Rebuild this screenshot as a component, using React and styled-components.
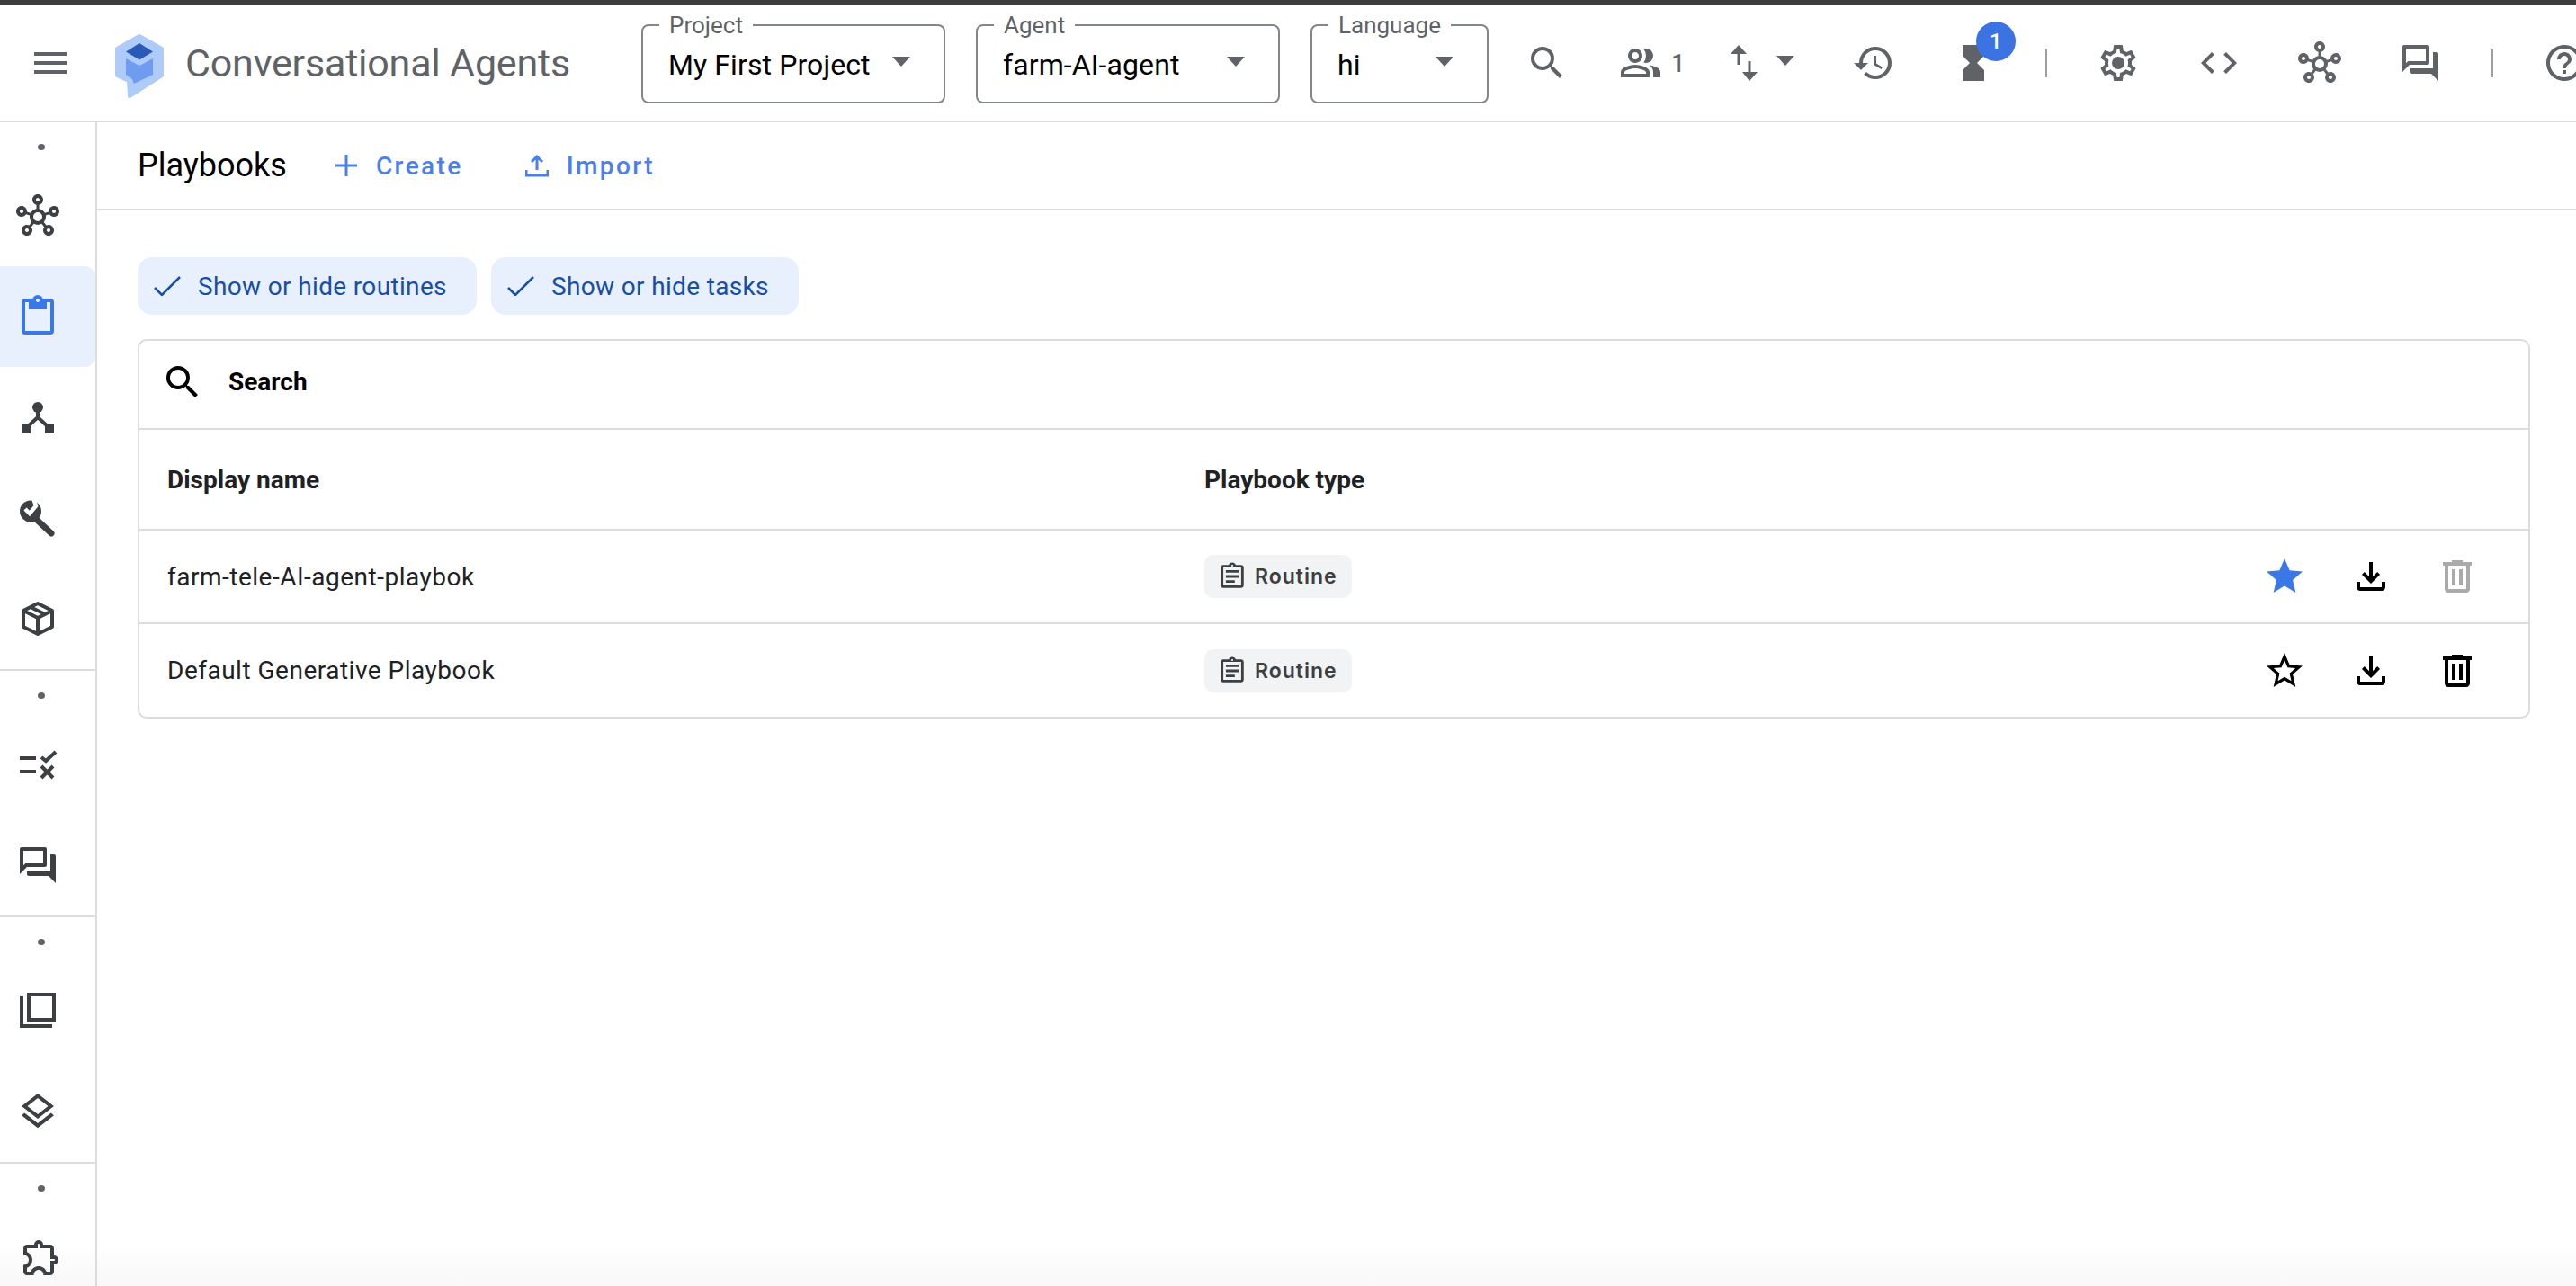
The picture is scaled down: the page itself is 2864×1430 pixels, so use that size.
import styled, {createGlobalStyle} from "styled-components";
import {
    MdMenu, MdSearch, MdOutlinePeopleAlt, MdHistory, MdHourglassFull,
    MdCode, MdOutlineHub, MdOutlineForum, MdHelpOutline, MdStar,
    MdStarBorder, MdOutlineLayers, MdOutlineExtension, MdOutlineAssignment,
} from "react-icons/md";

const GlobalStyle = createGlobalStyle`
    html, body {
        margin: 0;
        height: 100%;
        overflow: hidden;
        background: #fff;
    }
    #root {
        height: 100%;
    }
`;

const Page = styled.div`
    height: 100vh;
    display: flex;
    flex-direction: column;
    overflow: hidden;
    border-top: 6px solid #3c3c3c;
    box-sizing: border-box;
    font-family: Roboto, "Liberation Sans", sans-serif;
    background: linear-gradient(to bottom, #fff calc(100% - 50px), #f8f8f8 100%);
`;

const Header = styled.header`
    flex: 0 0 128px;
    display: flex;
    align-items: center;
    padding-left: 32px;
    border-bottom: 2px solid #dadce0;
    overflow: hidden;
`;

const Brand = styled.div`
    flex: 0 0 681px;
    display: flex;
    align-items: center;
`;

const Logo = styled.svg`
    width: 56px;
    height: 72px;
    margin-left: 47px;
    margin-top: 8px;
`;

const ProductName = styled.div`
    margin-left: 23px;
    font-size: 43px;
    color: #5f6368;
    white-space: nowrap;
    letter-spacing: -0.2px;
`;

const Select = styled.div`
    position: relative;
    flex: 0 0 ${p => p.$width}px;
    height: 88px;
    box-sizing: border-box;
    margin: 2px 34px 0 0;
    padding: 0 37px 0 28px;
    display: flex;
    align-items: center;
    justify-content: space-between;
    border: 2px solid #80868b;
    border-radius: 8px;
`;

const SelectLabel = styled.span`
    position: absolute;
    top: -13px;
    left: 18px;
    padding: 0 11px;
    background: #fff;
    font-size: 26px;
    line-height: 24px;
    color: #5f6368;
`;

const SelectValue = styled.span`
    font-size: 32px;
    letter-spacing: 0.1px;
    color: #000;
    white-space: nowrap;
    padding-top: 2px;
`;

const Caret = styled.span`
    flex: none;
    width: 0;
    height: 0;
    margin-left: ${p => p.$ml || 0}px;
    margin-top: -6px;
    border-left: 10px solid transparent;
    border-right: 10px solid transparent;
    border-top: 11px solid #5f6368;
`;

const Glyph = styled.span`
    flex: none;
    display: flex;
    width: 48px;
    height: 48px;
    font-size: 48px;
    color: ${p => p.$color || "#5f6368"};
    margin-left: ${p => p.$ml || 0}px;
`;

const Count = styled.span`
    margin-left: 10px;
    font-size: 28px;
    color: #5f6368;
`;

const HeaderDivider = styled.span`
    flex: none;
    width: 2px;
    height: 32px;
    margin-left: ${p => p.$ml}px;
    background: #9aa0a6;
`;

const BadgeSlot = styled.span`
    position: relative;
    flex: none;
    width: 48px;
    height: 48px;
    margin-left: ${p => p.$ml}px;
`;

const Badge = styled.span`
    position: absolute;
    top: -22px;
    left: 27px;
    width: 44px;
    height: 44px;
    border-radius: 50%;
    background: #3b73e3;
    color: #fff;
    font-size: 24px;
    font-weight: 500;
    display: flex;
    align-items: center;
    justify-content: center;
`;

const Body = styled.div`
    flex: 1;
    min-height: 0;
    display: flex;
`;

const Sidebar = styled.nav`
    flex: 0 0 106px;
    border-right: 2px solid #dadce0;
`;

const NavSection = styled.div`
    border-bottom: ${p => (p.$last ? "none" : "2px solid #dadce0")};
`;

const DotSlot = styled.div`
    height: 48px;
    box-sizing: border-box;
    padding: 24px 0 0 42px;
`;

const Dot = styled.span`
    display: block;
    width: 8px;
    height: 7px;
    border-radius: 50%;
    background: #5f6368;
`;

const NavItem = styled.div`
    height: 112px;
    display: flex;
    align-items: center;
    padding-left: 18px;
    border-radius: 0 12px 12px 0;
    background: ${p => (p.$active ? "#e8f0fe" : "transparent")};
`;

const Main = styled.main`
    flex: 1;
    min-width: 0;
`;

const PageHeader = styled.div`
    height: 96px;
    display: flex;
    align-items: center;
    padding-left: 45px;
    border-bottom: 2px solid #dadce0;
`;

const PageTitle = styled.h1`
    margin: 0;
    font-size: 36px;
    font-weight: 400;
    color: #000;
`;

const HeaderAction = styled.div`
    display: flex;
    align-items: center;
    margin-left: ${p => p.$ml}px;
    font-size: 28px;
    font-weight: 500;
    letter-spacing: 2.4px;
    color: #4a80ec;
`;

const ActionIcon = styled.svg`
    width: 26px;
    height: 26px;
    margin-right: 20px;
    fill: none;
    stroke: #4a80ec;
    stroke-width: 3;
`;

const Content = styled.div`
    padding: 52px 51px 0 45px;
`;

const ChipRow = styled.div`
    display: flex;
    gap: 16px;
    margin-bottom: 27px;
`;

const FilterChip = styled.div`
    height: 64px;
    display: flex;
    align-items: center;
    padding: 0 33px 0 18px;
    border-radius: 16px;
    background: #e8f0fe;
    font-size: 28px;
    letter-spacing: 0.35px;
    color: #174ea6;
`;

const CheckIcon = styled.svg`
    width: 30px;
    height: 22px;
    margin-right: 19px;
    fill: none;
    stroke: #174ea6;
    stroke-width: 2.5;
`;

const Card = styled.div`
    border: 2px solid #dadce0;
    border-radius: 10px;
`;

const SearchRow = styled.div`
    height: 99px;
    box-sizing: border-box;
    display: flex;
    align-items: center;
    padding: 0 0 6px 24px;
    border-bottom: 2px solid #dadce0;
    font-size: 28px;
    font-weight: 700;
    color: #000;
`;

const SearchLabel = styled.span`
    margin-left: 27px;
`;

const TableRow = styled.div`
    height: ${p => p.$height}px;
    display: flex;
    align-items: center;
    padding: 0 55px 0 31px;
    border-bottom: ${p => (p.$last ? "none" : "2px solid #dadce0")};
    font-size: 28px;
    letter-spacing: 0.5px;
    color: #202124;
`;

const NameCell = styled.div`
    flex: 0 0 1153px;
    font-weight: ${p => (p.$head ? 700 : 400)};
    letter-spacing: ${p => (p.$head ? 0 : 0.5)}px;
`;

const TypeCell = styled.div`
    flex: 1;
    font-weight: ${p => (p.$head ? 700 : 400)};
    letter-spacing: 0;
`;

const TypeChip = styled.span`
    display: inline-flex;
    align-items: center;
    width: 164px;
    height: 48px;
    box-sizing: border-box;
    padding-left: 14px;
    border-radius: 10px;
    background: #f1f3f4;
    font-family: Inter, Roboto, sans-serif;
    font-size: 23px;
    font-weight: 600;
    letter-spacing: 1px;
    color: #3c4043;
`;

const ChipGlyph = styled.span`
    display: flex;
    font-size: 34px;
    margin-right: 8px;
`;

const Actions = styled.div`
    display: flex;
    gap: 48px;
`;

const ToolSvg = styled.svg`
    flex: none;
    width: 48px;
    height: 48px;
    fill: ${p => p.$color || "#000"};
`;

const LineSvg = styled.svg`
    width: 48px;
    height: 48px;
    fill: none;
    stroke: ${p => p.$color || "#3c4043"};
    stroke-width: 4;
`;

const SwapSvg = styled.svg`
    flex: none;
    width: 48px;
    height: 48px;
    margin-left: ${p => p.$ml}px;
    fill: #5f6368;
    stroke: #5f6368;
    stroke-width: 3;
`;

function DownloadIcon() {
    return (
        <ToolSvg viewBox="0 0 24 24">
            <path d="M12 16l-5-5 1.4-1.45 2.6 2.6V4h2v8.15l2.6-2.6L17 11l-5 5ZM6 20q-.825 0-1.412-.588T4 18v-3h2v3h12v-3h2v3q0 .825-.587 1.413T18 20H6Z"/>
        </ToolSvg>
    );
}

function DeleteIcon({color}) {
    return (
        <ToolSvg viewBox="0 0 24 24" $color={color}>
            <path d="M7 21q-.825 0-1.412-.587T5 19V6H4V4h5V3h6v1h5v2h-1v13q0 .825-.587 1.413T17 21H7ZM17 6H7v13h10V6ZM9 17h2V8H9v9Zm4 0h2V8h-2v9Z"/>
        </ToolSvg>
    );
}

function GearIcon() {
    return (
        <ToolSvg viewBox="0 0 24 24" $color="#5f6368">
            <path d="M19.43 12.98c.04-.32.07-.64.07-.98 0-.34-.03-.66-.07-.98l2.11-1.65c.19-.15.24-.42.12-.64l-2-3.46c-.09-.16-.26-.25-.44-.25-.06 0-.12.01-.17.03l-2.49 1c-.52-.4-1.08-.73-1.69-.98l-.38-2.65C14.46 2.18 14.25 2 14 2h-4c-.25 0-.46.18-.49.42l-.38 2.65c-.61.25-1.17.59-1.69.98l-2.49-1c-.06-.02-.12-.03-.18-.03-.17 0-.34.09-.43.25l-2 3.46c-.13.22-.07.49.12.64l2.11 1.65c-.04.32-.07.65-.07.98 0 .33.03.66.07.98l-2.11 1.65c-.19.15-.24.42-.12.64l2 3.46c.09.16.26.25.44.25.06 0 .12-.01.17-.03l2.49-1c.52.4 1.08.73 1.69.98l.38 2.65c.03.24.24.42.49.42h4c.25 0 .46-.18.49-.42l.38-2.65c.61-.25 1.17-.59 1.69-.98l2.49 1c.06.02.12.03.18.03.17 0 .34-.09.43-.25l2-3.46c.12-.22.07-.49-.12-.64l-2.11-1.65zm-1.98-1.71c.04.31.05.52.05.73 0 .21-.02.43-.05.73l-.14 1.13.89.7 1.08.84-.7 1.21-1.27-.51-1.04-.42-.9.68c-.43.32-.84.56-1.25.73l-1.06.43-.16 1.13-.2 1.35h-1.4l-.19-1.35-.16-1.13-1.06-.43c-.43-.18-.83-.41-1.23-.71l-.91-.7-1.06.43-1.27.51-.7-1.21 1.08-.84.89-.7-.14-1.13c-.03-.31-.05-.54-.05-.74s.02-.43.05-.73l.14-1.13-.89-.7-1.08-.84.7-1.21 1.27.51 1.04.42.9-.68c.43-.32.84-.56 1.25-.73l1.06-.43.16-1.13.2-1.35h1.39l.19 1.35.16 1.13 1.06.43c.43.18.83.41 1.23.71l.91.7 1.06-.43 1.27-.51.7 1.21-1.07.85-.89.7.14 1.13z"/>
            <circle cx="12" cy="12" r="3.5"/>
        </ToolSvg>
    );
}

function ClipboardIcon() {
    return (
        <LineSvg viewBox="0 0 48 48" $color="#3b78e7">
            <rect x="8" y="6" width="32" height="36" rx="2"/>
            <path d="M14 6H18A6 6 0 0 1 30 6H34V16H14Z" fill="#3b78e7" stroke="none"/>
            <circle cx="24" cy="6" r="2" fill="#e8f0fe" stroke="none"/>
        </LineSvg>
    );
}

function ForkIcon() {
    return (
        <LineSvg viewBox="0 0 48 48">
            <path d="M24 13V24L11 36M24 24L37 36"/>
            <circle cx="24" cy="13" r="6" fill="#3c4043" stroke="none"/>
            <rect x="6" y="32" width="10" height="10" fill="#3c4043" stroke="none"/>
            <rect x="32" y="32" width="10" height="10" fill="#3c4043" stroke="none"/>
        </LineSvg>
    );
}

function WrenchIcon() {
    return (
        <LineSvg viewBox="0 0 48 48">
            <path d="M24 27L39 41" strokeWidth="7" strokeLinecap="round"/>
            <circle cx="16" cy="16.5" r="12" fill="#3c4043" stroke="none"/>
            <path d="M10 14L15 19L22 10.5L19 2" stroke="#fff" strokeWidth="4.5"/>
        </LineSvg>
    );
}

function PackageIcon() {
    return (
        <LineSvg viewBox="0 0 48 48" strokeLinejoin="round">
            <path d="M24 7L40 15V33L24 41L8 33V15ZM8 15L24 23L40 15M24 23V41M16 11L32 19"/>
        </LineSvg>
    );
}

function RuleIcon() {
    return (
        <LineSvg viewBox="0 0 48 48">
            <path d="M4 17H22M4 32H22M28 16L33 20L44 10M28 26L41 39M41 26L28 39"/>
        </LineSvg>
    );
}

function LibraryIcon() {
    return (
        <LineSvg viewBox="0 0 48 48">
            <rect x="14" y="6" width="28" height="28"/>
            <path d="M6 7V41H40"/>
        </LineSvg>
    );
}

const NAV_SECTIONS = [
    [
        {key: "flows", icon: <MdOutlineHub/>},
        {key: "playbooks", icon: <ClipboardIcon/>, active: true},
        {key: "fork", icon: <ForkIcon/>},
        {key: "tools", icon: <WrenchIcon/>},
        {key: "package", icon: <PackageIcon/>},
    ],
    [
        {key: "rules", icon: <RuleIcon/>},
        {key: "chat", icon: <MdOutlineForum/>},
    ],
    [
        {key: "library", icon: <LibraryIcon/>},
        {key: "layers", icon: <MdOutlineLayers/>},
    ],
    [
        {key: "extensions", icon: <MdOutlineExtension/>, shift: 4},
    ],
];

const PLAYBOOKS = [
    {name: "farm-tele-AI-agent-playbok", height: 102, starred: true},
    {name: "Default Generative Playbook", height: 103, last: true},
];

export default function App() {
    return (
        <>
            <GlobalStyle/>
            <Page>
                <Header>
                    <Brand>
                        <Glyph><MdMenu/></Glyph>
                        <Logo viewBox="0 0 56 72">
                            <path
                                d="M28 2L53 16V46L17 69L16 52L3 46V16Z"
                                fill="#aecbfa"
                                stroke="#aecbfa"
                                strokeWidth="4"
                                strokeLinejoin="round"
                            />
                            <path d="M13 27L28 35L43 27V45L22 55L20 50L13 45Z" fill="#6f9cf0"/>
                            <path d="M28 10L43 19.5L28 28.5L13 19.5Z" fill="#2a5ab8"/>
                        </Logo>
                        <ProductName>Conversational Agents</ProductName>
                    </Brand>
                    <Select $width={338}>
                        <SelectLabel>Project</SelectLabel>
                        <SelectValue>My First Project</SelectValue>
                        <Caret/>
                    </Select>
                    <Select $width={338}>
                        <SelectLabel>Agent</SelectLabel>
                        <SelectValue>farm-AI-agent</SelectValue>
                        <Caret/>
                    </Select>
                    <Select $width={198}>
                        <SelectLabel>Language</SelectLabel>
                        <SelectValue>hi</SelectValue>
                        <Caret/>
                    </Select>
                    <Glyph $ml={7}><MdSearch/></Glyph>
                    <Glyph $ml={56}><MdOutlinePeopleAlt/></Glyph>
                    <Count>1</Count>
                    <SwapSvg $ml={40} viewBox="0 0 48 48">
                        <path d="M19 26V6" fill="none"/>
                        <path d="M10 14L19 4L28 14Z" stroke="none"/>
                        <path d="M31 22V42" fill="none"/>
                        <path d="M23 34L31 44L40 34Z" stroke="none"/>
                    </SwapSvg>
                    <Caret $ml={13}/>
                    <Glyph $ml={64}><MdHistory/></Glyph>
                    <BadgeSlot $ml={63}>
                        <Glyph><MdHourglassFull/></Glyph>
                        <Badge>1</Badge>
                    </BadgeSlot>
                    <HeaderDivider $ml={56}/>
                    <Glyph $ml={55}><GearIcon/></Glyph>
                    <Glyph $ml={64}><MdCode/></Glyph>
                    <Glyph $ml={64}><MdOutlineHub/></Glyph>
                    <Glyph $ml={64}><MdOutlineForum/></Glyph>
                    <HeaderDivider $ml={55}/>
                    <Glyph $ml={55}><MdHelpOutline/></Glyph>
                </Header>
                <Body>
                    <Sidebar>
                        {NAV_SECTIONS.map((items, i) => (
                            <NavSection key={i} $last={i === NAV_SECTIONS.length - 1}>
                                <DotSlot><Dot/></DotSlot>
                                {items.map(item => (
                                    <NavItem key={item.key} $active={item.active}>
                                        <Glyph $color="#3c4043" $ml={item.shift}>{item.icon}</Glyph>
                                    </NavItem>
                                ))}
                            </NavSection>
                        ))}
                    </Sidebar>
                    <Main>
                        <PageHeader>
                            <PageTitle>Playbooks</PageTitle>
                            <HeaderAction $ml={53}>
                                <ActionIcon viewBox="0 0 26 26">
                                    <path d="M13 1V25M1 13H25"/>
                                </ActionIcon>
                                Create
                            </HeaderAction>
                            <HeaderAction $ml={69}>
                                <ActionIcon viewBox="0 0 26 26">
                                    <path d="M13 18V3M7 9L13 3L19 9M1 18V24H25V18"/>
                                </ActionIcon>
                                Import
                            </HeaderAction>
                        </PageHeader>
                        <Content>
                            <ChipRow>
                                {["Show or hide routines", "Show or hide tasks"].map(label => (
                                    <FilterChip key={label}>
                                        <CheckIcon viewBox="0 0 30 22">
                                            <path d="M1 13L9 21L29 1"/>
                                        </CheckIcon>
                                        {label}
                                    </FilterChip>
                                ))}
                            </ChipRow>
                            <Card>
                                <SearchRow>
                                    <Glyph $color="#000"><MdSearch/></Glyph>
                                    <SearchLabel>Search</SearchLabel>
                                </SearchRow>
                                <TableRow $height={110}>
                                    <NameCell $head>Display name</NameCell>
                                    <TypeCell $head>Playbook type</TypeCell>
                                </TableRow>
                                {PLAYBOOKS.map(row => (
                                    <TableRow key={row.name} $height={row.height} $last={row.last}>
                                        <NameCell>{row.name}</NameCell>
                                        <TypeCell>
                                            <TypeChip>
                                                <ChipGlyph><MdOutlineAssignment/></ChipGlyph>
                                                Routine
                                            </TypeChip>
                                        </TypeCell>
                                        <Actions>
                                            <Glyph $color={row.starred ? "#3b78e7" : "#000"}>
                                                {row.starred ? <MdStar/> : <MdStarBorder/>}
                                            </Glyph>
                                            <DownloadIcon/>
                                            <DeleteIcon color={row.starred ? "#aaa" : "#000"}/>
                                        </Actions>
                                    </TableRow>
                                ))}
                            </Card>
                        </Content>
                    </Main>
                </Body>
            </Page>
        </>
    );
}
